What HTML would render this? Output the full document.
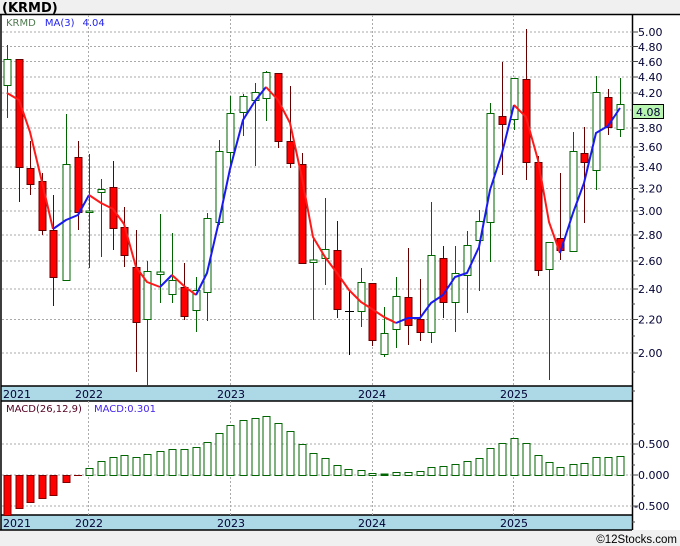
<!DOCTYPE html>
<html><head><meta charset="utf-8"><style>
html,body{margin:0;padding:0;background:#f0f0f0;}
svg{display:block;font-family:"DejaVu Sans","Liberation Sans",sans-serif;}
</style></head><body>
<svg width="680" height="546" viewBox="0 0 680 546" xmlns="http://www.w3.org/2000/svg">
<rect x="0" y="0" width="680" height="546" fill="#f0f0f0"/>
<text x="2" y="12" font-size="13" font-weight="bold" fill="#000">(KRMD)</text>
<rect x="1" y="14" width="679" height="516" fill="#fff"/>
<rect x="1" y="386" width="631" height="15" fill="#add8e6"/>
<rect x="1" y="515" width="631" height="15" fill="#add8e6"/>
<g stroke="#000" stroke-width="1.5" fill="none">
<line x1="0" y1="14.5" x2="680" y2="14.5"/>
<line x1="1" y1="14" x2="1" y2="530"/>
<line x1="632.5" y1="14" x2="632.5" y2="530"/>
<line x1="1" y1="386" x2="632" y2="386"/>
<line x1="1" y1="401" x2="632" y2="401"/>
<line x1="1" y1="515" x2="632" y2="515"/>
<line x1="0" y1="530" x2="632" y2="530"/>
</g>
<g stroke="#aaa" stroke-width="1" stroke-dasharray="2,2">
<line x1="2" y1="32" x2="632" y2="32"/><line x1="2" y1="46.5" x2="632" y2="46.5"/>
<line x1="2" y1="61.5" x2="632" y2="61.5"/><line x1="2" y1="77" x2="632" y2="77"/>
<line x1="2" y1="93" x2="632" y2="93"/><line x1="2" y1="110" x2="632" y2="110"/>
<line x1="2" y1="128" x2="632" y2="128"/><line x1="2" y1="147" x2="632" y2="147"/>
<line x1="2" y1="167" x2="632" y2="167"/><line x1="2" y1="188.5" x2="632" y2="188.5"/>
<line x1="2" y1="211" x2="632" y2="211"/><line x1="2" y1="235" x2="632" y2="235"/>
<line x1="2" y1="261" x2="632" y2="261"/><line x1="2" y1="289" x2="632" y2="289"/>
<line x1="2" y1="319.5" x2="632" y2="319.5"/><line x1="2" y1="353" x2="632" y2="353"/>
<line x1="88.5" y1="15" x2="88.5" y2="386"/><line x1="230.5" y1="15" x2="230.5" y2="386"/>
<line x1="372.5" y1="15" x2="372.5" y2="386"/><line x1="513.5" y1="15" x2="513.5" y2="386"/>
<line x1="88.5" y1="401" x2="88.5" y2="515"/><line x1="230.5" y1="401" x2="230.5" y2="515"/>
<line x1="372.5" y1="401" x2="372.5" y2="515"/><line x1="513.5" y1="401" x2="513.5" y2="515"/>
<line x1="2" y1="444" x2="632" y2="444"/><line x1="2" y1="475" x2="632" y2="475"/><line x1="2" y1="506" x2="632" y2="506"/>
</g>
<g stroke="#444" stroke-width="1">
<line x1="632" y1="32" x2="638" y2="32"/><line x1="632" y1="46.5" x2="638" y2="46.5"/><line x1="632" y1="61.5" x2="638" y2="61.5"/><line x1="632" y1="77" x2="638" y2="77"/><line x1="632" y1="93" x2="638" y2="93"/><line x1="632" y1="128" x2="638" y2="128"/><line x1="632" y1="147" x2="638" y2="147"/><line x1="632" y1="167" x2="638" y2="167"/><line x1="632" y1="188.5" x2="638" y2="188.5"/><line x1="632" y1="211" x2="638" y2="211"/><line x1="632" y1="235" x2="638" y2="235"/><line x1="632" y1="261" x2="638" y2="261"/><line x1="632" y1="289" x2="638" y2="289"/><line x1="632" y1="319.5" x2="638" y2="319.5"/><line x1="632" y1="353" x2="638" y2="353"/>
<line x1="632" y1="157" x2="635" y2="157"/><line x1="632" y1="178" x2="635" y2="178"/><line x1="632" y1="199" x2="635" y2="199"/><line x1="632" y1="223" x2="635" y2="223"/><line x1="632" y1="248" x2="635" y2="248"/><line x1="632" y1="275" x2="635" y2="275"/><line x1="632" y1="304" x2="635" y2="304"/><line x1="632" y1="336" x2="635" y2="336"/><line x1="632" y1="372" x2="635" y2="372"/><line x1="632" y1="391" x2="635" y2="391"/>
<line x1="632" y1="444" x2="638" y2="444"/><line x1="632" y1="475" x2="638" y2="475"/><line x1="632" y1="506" x2="638" y2="506"/>
<line x1="632" y1="424" x2="635" y2="424"/><line x1="632" y1="434" x2="635" y2="434"/><line x1="632" y1="454" x2="635" y2="454"/><line x1="632" y1="465" x2="635" y2="465"/><line x1="632" y1="485" x2="635" y2="485"/><line x1="632" y1="496" x2="635" y2="496"/><line x1="632" y1="522" x2="635" y2="522"/>
</g>
<g font-size="11" fill="#000033">
<text x="638" y="36">5.00</text><text x="638" y="51">4.80</text><text x="638" y="66">4.60</text><text x="638" y="81">4.40</text><text x="638" y="97">4.20</text><text x="638" y="132">3.80</text><text x="638" y="151">3.60</text><text x="638" y="171">3.40</text><text x="638" y="192.5">3.20</text><text x="638" y="215">3.00</text><text x="638" y="239">2.80</text><text x="638" y="265">2.60</text><text x="638" y="293">2.40</text><text x="638" y="323.5">2.20</text><text x="638" y="357">2.00</text>
<text x="638" y="448">0.500</text><text x="638" y="479">0.000</text><text x="634" y="510">-0.500</text>
</g>
<rect x="632.5" y="104.5" width="31" height="14" fill="#b8f5b0" stroke="#000" stroke-width="1"/>
<text x="636" y="116" font-size="11" fill="#000033">4.08</text>
<g font-size="11" fill="#000033">
<text x="3" y="398">2021</text><text x="75" y="398">2022</text><text x="217" y="398">2023</text><text x="358" y="398">2024</text><text x="500" y="398">2025</text>
<text x="3" y="527">2021</text><text x="75" y="527">2022</text><text x="217" y="527">2023</text><text x="358" y="527">2024</text><text x="500" y="527">2025</text>
</g>
<text x="6" y="26" font-size="10"><tspan fill="#4f7a4f">KRMD</tspan><tspan fill="#2222ee" dx="9">MA(3)</tspan><tspan fill="#2222ee" dx="8">4.04</tspan></text>
<text x="6" y="412" font-size="10"><tspan fill="#550022">MACD(26,12,9)</tspan><tspan fill="#4422ee" dx="12">MACD:0.301</tspan></text>
<g stroke-width="1">
<g stroke="#006400" fill="#fff">
<line x1="7.5" y1="45" x2="7.5" y2="118"/><rect x="4" y="59.5" width="7" height="26"/>
<line x1="66.5" y1="114" x2="66.5" y2="280"/><rect x="63" y="164.5" width="7" height="116"/>
<line x1="89.5" y1="154" x2="89.5" y2="268"/><rect x="86" y="211" width="7" height="1.5"/>
<line x1="101.5" y1="179" x2="101.5" y2="257"/><rect x="98" y="189.5" width="7" height="3"/>
<line x1="147.5" y1="261" x2="147.5" y2="386"/><rect x="144" y="271.5" width="7" height="48"/>
<line x1="160.5" y1="214" x2="160.5" y2="303"/><rect x="157" y="272" width="7" height="2.5"/>
<line x1="172.5" y1="233" x2="172.5" y2="303"/><rect x="169" y="280.5" width="7" height="14"/>
<line x1="196.5" y1="277" x2="196.5" y2="332"/><rect x="193" y="290.5" width="7" height="20"/>
<line x1="207.5" y1="213" x2="207.5" y2="321"/><rect x="204" y="218.5" width="7" height="74"/>
<line x1="219.5" y1="140" x2="219.5" y2="225"/><rect x="216" y="151.5" width="7" height="71"/>
<line x1="230.5" y1="96" x2="230.5" y2="165"/><rect x="227" y="113.5" width="7" height="39"/>
<line x1="243.5" y1="94" x2="243.5" y2="136"/><rect x="240" y="96.5" width="7" height="16"/>
<line x1="255.5" y1="83" x2="255.5" y2="166"/><rect x="252" y="92.5" width="7" height="8"/>
<line x1="266.5" y1="71" x2="266.5" y2="121"/><rect x="263" y="72.5" width="7" height="26"/>
<line x1="313.5" y1="238" x2="313.5" y2="320"/><rect x="310" y="260" width="7" height="2.5"/>
<line x1="325.5" y1="198" x2="325.5" y2="285"/><rect x="322" y="249.5" width="7" height="9"/>
<line x1="361.5" y1="268" x2="361.5" y2="327"/><rect x="358" y="282.5" width="7" height="29"/>
<line x1="384.5" y1="307" x2="384.5" y2="357"/><rect x="381" y="333.5" width="7" height="21"/>
<line x1="396.5" y1="277" x2="396.5" y2="348"/><rect x="393" y="296.5" width="7" height="33"/>
<line x1="431.5" y1="202" x2="431.5" y2="343"/><rect x="428" y="255.5" width="7" height="77"/>
<line x1="455.5" y1="246" x2="455.5" y2="332"/><rect x="452" y="273.5" width="7" height="29"/>
<line x1="467.5" y1="231" x2="467.5" y2="313"/><rect x="464" y="245.5" width="7" height="30"/>
<line x1="479.5" y1="210" x2="479.5" y2="291"/><rect x="476" y="221.5" width="7" height="19"/>
<line x1="490.5" y1="103" x2="490.5" y2="262"/><rect x="487" y="113.5" width="7" height="109"/>
<line x1="514.5" y1="78" x2="514.5" y2="130"/><rect x="511" y="78.5" width="7" height="41"/>
<line x1="549.5" y1="242" x2="549.5" y2="380"/><rect x="546" y="242.5" width="7" height="27"/>
<line x1="573.5" y1="132" x2="573.5" y2="251"/><rect x="570" y="151.5" width="7" height="100"/>
<line x1="596.5" y1="76" x2="596.5" y2="190"/><rect x="593" y="92.5" width="7" height="78"/>
<line x1="620.5" y1="78" x2="620.5" y2="137"/><rect x="617" y="104.5" width="7" height="25"/>
</g>
<g stroke="#660000" fill="#ff0000">
<line x1="19.5" y1="59" x2="19.5" y2="202"/><rect x="16" y="59.5" width="7" height="108"/>
<line x1="30.5" y1="141" x2="30.5" y2="195"/><rect x="27" y="168.5" width="7" height="16"/>
<line x1="42.5" y1="173" x2="42.5" y2="235"/><rect x="39" y="181.5" width="7" height="49"/>
<line x1="53.5" y1="195" x2="53.5" y2="306"/><rect x="50" y="230.5" width="7" height="47"/>
<line x1="78.5" y1="141" x2="78.5" y2="230"/><rect x="75" y="157.5" width="7" height="55"/>
<line x1="113.5" y1="161" x2="113.5" y2="250"/><rect x="110" y="187.5" width="7" height="41"/>
<line x1="124.5" y1="207" x2="124.5" y2="267"/><rect x="121" y="227.5" width="7" height="28"/>
<line x1="136.5" y1="230" x2="136.5" y2="372"/><rect x="133" y="267.5" width="7" height="55"/>
<line x1="184.5" y1="263" x2="184.5" y2="320"/><rect x="181" y="287.5" width="7" height="29"/>
<line x1="278.5" y1="73" x2="278.5" y2="148"/><rect x="275" y="73.5" width="7" height="68"/>
<line x1="290.5" y1="86" x2="290.5" y2="168"/><rect x="287" y="141.5" width="7" height="22"/>
<line x1="302.5" y1="153" x2="302.5" y2="263"/><rect x="299" y="164.5" width="7" height="99"/>
<line x1="337.5" y1="221" x2="337.5" y2="318"/><rect x="334" y="250.5" width="7" height="59"/>
<line x1="372.5" y1="283" x2="372.5" y2="346"/><rect x="369" y="283.5" width="7" height="57"/>
<line x1="408.5" y1="248" x2="408.5" y2="345"/><rect x="405" y="297.5" width="7" height="28"/>
<line x1="420.5" y1="279" x2="420.5" y2="341"/><rect x="417" y="319.5" width="7" height="13"/>
<line x1="443.5" y1="246" x2="443.5" y2="318"/><rect x="440" y="258.5" width="7" height="44"/>
<line x1="502.5" y1="62" x2="502.5" y2="175"/><rect x="499" y="116.5" width="7" height="8"/>
<line x1="526.5" y1="29" x2="526.5" y2="180"/><rect x="523" y="79.5" width="7" height="83"/>
<line x1="538.5" y1="156" x2="538.5" y2="276"/><rect x="535" y="162.5" width="7" height="108"/>
<line x1="560.5" y1="173" x2="560.5" y2="260"/><rect x="557" y="238.5" width="7" height="12"/>
<line x1="584.5" y1="127" x2="584.5" y2="223"/><rect x="581" y="153.5" width="7" height="9"/>
<line x1="608.5" y1="89" x2="608.5" y2="135"/><rect x="605" y="97.5" width="7" height="30"/>
</g>
<line x1="349.5" y1="290" x2="349.5" y2="355" stroke="#000"/><line x1="345" y1="311.5" x2="354" y2="311.5" stroke="#000"/>
</g>
<g fill="none" stroke-width="2" stroke-linejoin="round">
<polyline stroke="#ff1a1a" points="7,93 19,100 30,132 42,182 53,229"/>
<polyline stroke="#1a1aee" points="53,229 66,220 78,215 89,195"/>
<polyline stroke="#ff1a1a" points="89,195 101,203 113,209 124,224 136,267 147,282 160,287"/>
<polyline stroke="#1a1aee" points="160,287 172,275"/>
<polyline stroke="#ff1a1a" points="172,275 184,286 196,295"/>
<polyline stroke="#1a1aee" points="196,295 207,273 219,221 230,169 243,120 255,101 266,87"/>
<polyline stroke="#ff1a1a" points="266,87 278,100 290,123 302,178 313,237 325,257 337,273 349,290 361,302 372,309 384,317 396,323"/>
<polyline stroke="#1a1aee" points="396,323 408,318 420,318 431,303 443,295 455,277 467,273 479,247 490,190 502,153 514,105"/>
<polyline stroke="#ff1a1a" points="514,105 526,117 538,160 549,222 560,253"/>
<polyline stroke="#1a1aee" points="560,253 573,213 584,183 596,133 608,126 620,108"/>
</g>
<g stroke="#800000" fill="#ff0000" stroke-width="1">
<rect x="4" y="475.5" width="7" height="40"/>
<rect x="16" y="475.5" width="7" height="33"/>
<rect x="27" y="475.5" width="7" height="27"/>
<rect x="39" y="475.5" width="7" height="23"/>
<rect x="50" y="475.5" width="7" height="20"/>
<rect x="63" y="475.5" width="7" height="7"/>
<line x1="74" y1="475.5" x2="82" y2="475.5"/>
</g>
<g stroke="#006400" fill="#fff" stroke-width="1">
<rect x="86" y="468.5" width="7" height="7"/><rect x="98" y="461.5" width="7" height="14"/><rect x="110" y="457.5" width="7" height="18"/><rect x="121" y="455.5" width="7" height="20"/><rect x="133" y="457.5" width="7" height="18"/><rect x="144" y="454.5" width="7" height="21"/><rect x="157" y="451.5" width="7" height="24"/><rect x="169" y="449.5" width="7" height="26"/><rect x="181" y="449.5" width="7" height="26"/><rect x="193" y="447.5" width="7" height="28"/><rect x="204" y="442.5" width="7" height="33"/><rect x="216" y="433.5" width="7" height="42"/><rect x="227" y="425.5" width="7" height="50"/><rect x="240" y="420.5" width="7" height="55"/><rect x="252" y="418.5" width="7" height="57"/><rect x="263" y="416.5" width="7" height="59"/><rect x="275" y="423.5" width="7" height="52"/><rect x="287" y="431.5" width="7" height="44"/><rect x="299" y="444.5" width="7" height="31"/><rect x="310" y="453.5" width="7" height="22"/><rect x="322" y="458.5" width="7" height="17"/><rect x="334" y="465.5" width="7" height="10"/><rect x="345" y="469.5" width="7" height="6"/><rect x="358" y="470.5" width="7" height="5"/><rect x="369" y="473.5" width="7" height="2"/><rect x="381" y="474" width="7" height="1.5" fill="#006400"/><rect x="393" y="472.5" width="7" height="3"/><rect x="405" y="472.5" width="7" height="3"/><rect x="417" y="471.5" width="7" height="4"/><rect x="428" y="467.5" width="7" height="8"/><rect x="440" y="466.5" width="7" height="9"/><rect x="452" y="464.5" width="7" height="11"/><rect x="464" y="461.5" width="7" height="14"/><rect x="476" y="458.5" width="7" height="17"/><rect x="487" y="448.5" width="7" height="27"/><rect x="499" y="443.5" width="7" height="32"/><rect x="511" y="438.5" width="7" height="37"/><rect x="523" y="443.5" width="7" height="32"/><rect x="535" y="455.5" width="7" height="20"/><rect x="546" y="462.5" width="7" height="13"/><rect x="557" y="467.5" width="7" height="8"/><rect x="570" y="464.5" width="7" height="11"/><rect x="581" y="463.5" width="7" height="12"/><rect x="593" y="457.5" width="7" height="18"/><rect x="605" y="457.5" width="7" height="18"/><rect x="617" y="456.5" width="7" height="19"/>
</g>
<rect x="0" y="531" width="680" height="15" fill="#f0f0f0"/>
<text x="677" y="543" font-size="11.5" fill="#000" text-anchor="end" font-family="Liberation Sans, sans-serif">©12Stocks.com</text>
</svg>
</body></html>
